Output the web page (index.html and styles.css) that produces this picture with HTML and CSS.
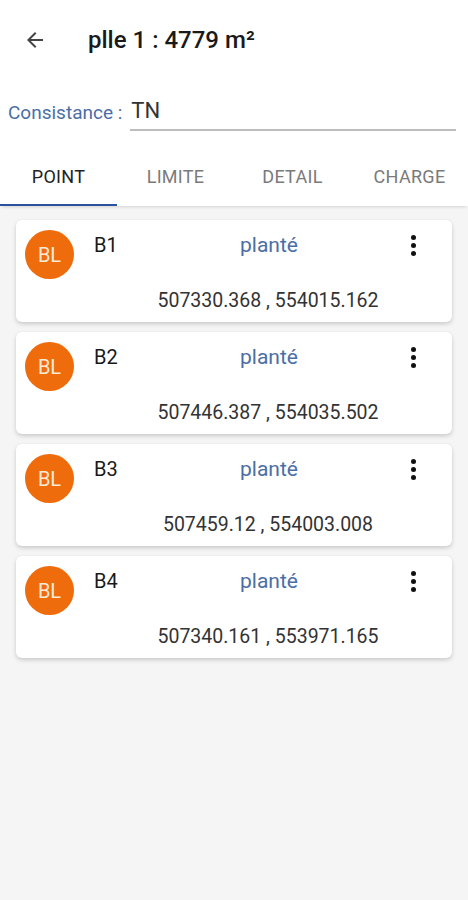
FILE: index.html
```html
<!DOCTYPE html>
<html lang="fr">
<head>
    <meta charset="UTF-8">
    <meta name="viewport" content="width=device-width, initial-scale=1.0">
    <title>Parcelle</title>
    <link rel="stylesheet" href="styles.css">
</head>
<body>

    <!-- Barre du haut -->
    <header class="appbar">
        <button class="back" aria-label="Retour">
            <svg width="24" height="24" viewBox="0 0 24 24"><path d="M20 11H7.83l5.59-5.59L12 4l-8 8 8 8 1.41-1.41L7.83 13H20v-2z" fill="#444"/></svg>
        </button>
        <h1 class="title">plle 1 : 4779 m²</h1>
    </header>

    <!-- Consistance -->
    <div class="field">
        <label class="field-label">Consistance :</label>
        <div class="field-value">TN</div>
    </div>

    <!-- Onglets -->
    <nav class="tabs">
        <div class="tab active">POINT</div>
        <div class="tab">LIMITE</div>
        <div class="tab">DETAIL</div>
        <div class="tab">CHARGE</div>
    </nav>

    <!-- Liste des points -->
    <main class="list">
        <div class="card">
            <div class="avatar">BL</div>
            <div class="card-body">
                <div class="card-top">
                    <span class="name">B1</span>
                    <span class="state">planté</span>
                    <span class="menu"><i></i><i></i><i></i></span>
                </div>
                <div class="coords">507330.368 , 554015.162</div>
            </div>
        </div>
        <div class="card">
            <div class="avatar">BL</div>
            <div class="card-body">
                <div class="card-top">
                    <span class="name">B2</span>
                    <span class="state">planté</span>
                    <span class="menu"><i></i><i></i><i></i></span>
                </div>
                <div class="coords">507446.387 , 554035.502</div>
            </div>
        </div>
        <div class="card">
            <div class="avatar">BL</div>
            <div class="card-body">
                <div class="card-top">
                    <span class="name">B3</span>
                    <span class="state">planté</span>
                    <span class="menu"><i></i><i></i><i></i></span>
                </div>
                <div class="coords">507459.12 , 554003.008</div>
            </div>
        </div>
        <div class="card">
            <div class="avatar">BL</div>
            <div class="card-body">
                <div class="card-top">
                    <span class="name">B4</span>
                    <span class="state">planté</span>
                    <span class="menu"><i></i><i></i><i></i></span>
                </div>
                <div class="coords">507340.161 , 553971.165</div>
            </div>
        </div>
    </main>

</body>
</html>
```

FILE: styles.css
```css
html, body {
    height: 100%;
}

body {
    margin: 0;
    font-family: Roboto, "Liberation Sans", Arial, sans-serif;
    color: #222;
    background-color: #f5f5f5;
    display: flex;
    flex-direction: column;
}

.appbar {
    height: 80px;
    display: flex;
    align-items: center;
    background-color: #fff;
}

.back {
    border: none;
    background: none;
    padding: 0;
    margin-left: 23px;
    width: 24px;
    height: 24px;
}

.title {
    margin: 0 0 0 41px;
    font-size: 24px;
    font-weight: 500;
    color: #1a1a1a;
}

.field {
    display: flex;
    align-items: center;
    background-color: #fff;
    padding: 13px 12px 23px 8px;
}

.field-label {
    font-size: 19px;
    color: #4b6ea6;
    margin-right: 8px;
}

.field-value {
    flex: 1;
    font-size: 22px;
    color: #333;
    padding: 5px 0 6px 1px;
    border-bottom: 2px solid #bdbdbd;
}

.tabs {
    display: flex;
    height: 52px;
    background-color: #fff;
    box-shadow: 0 3px 3px -2px rgba(0, 0, 0, 0.14);
}

.tab {
    flex: 1;
    display: flex;
    align-items: center;
    justify-content: center;
    box-sizing: border-box;
    padding-bottom: 7px;
    font-size: 18px;
    color: #7a7a7a;
    letter-spacing: 0.3px;
}

.tab.active {
    color: #222;
    border-bottom: 2px solid #2a52a0;
    padding-bottom: 5px;
}

.list {
    flex: 1;
    padding: 14px 16px;
    display: flex;
    flex-direction: column;
    gap: 10px;
}

.card {
    display: flex;
    background-color: #fff;
    border-radius: 6px;
    box-shadow: 0 2px 4px rgba(0, 0, 0, 0.18);
    height: 102px;
    box-sizing: border-box;
    padding: 10px 0 0 9px;
}

.avatar {
    width: 49px;
    height: 49px;
    border-radius: 50%;
    background-color: #ee6c0c;
    color: #fbe9d7;
    font-size: 20px;
    display: flex;
    align-items: center;
    justify-content: center;
    flex-shrink: 0;
}

.card-body {
    flex: 1;
    padding-left: 20px;
}

.card-top {
    display: flex;
    align-items: center;
    height: 30px;
}

.name {
    width: 115px;
    font-size: 20px;
    color: #1a1a1a;
}

.state {
    width: 120px;
    text-align: center;
    font-size: 21px;
    color: #4b6ea6;
}

.menu {
    margin-left: 82px;
    display: flex;
    flex-direction: column;
    gap: 3px;
}

.menu i {
    width: 5px;
    height: 5px;
    border-radius: 50%;
    background-color: #111;
}

.coords {
    width: 240px;
    margin-top: 29px;
    margin-left: 54px;
    text-align: center;
    font-size: 19.5px;
    color: #333;
}
```
